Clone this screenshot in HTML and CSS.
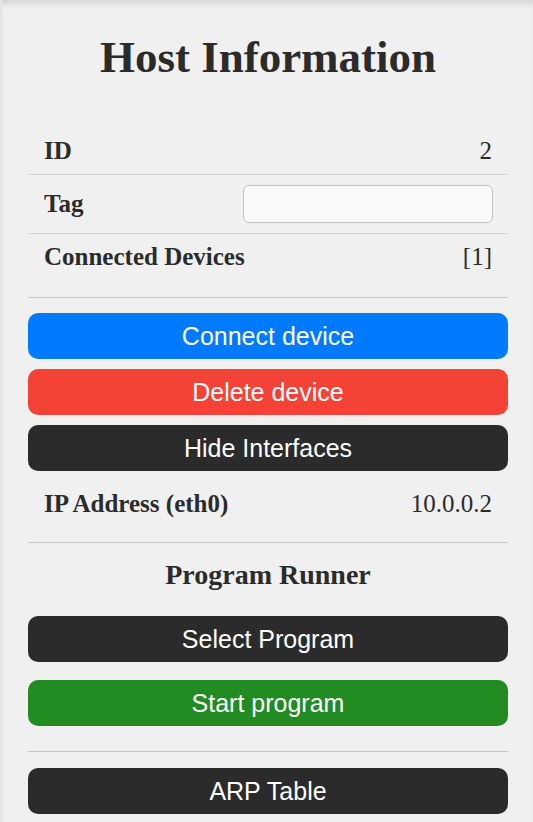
FILE: index.html
```html
<!DOCTYPE html>
<html>
<head>
<meta charset="utf-8">
<link rel="stylesheet" href="styles.css">
</head>
<body>
<div class="panel">
  <h1 class="title">Host Information</h1>
  <div class="info">
    <div class="row row-id"><span class="label">ID</span><span class="value">2</span></div>
    <div class="row row-tag"><span class="label">Tag</span><input class="tag-input" type="text"></div>
    <div class="row row-last"><span class="label">Connected Devices</span><span class="value">[1]</span></div>
  </div>
  <div class="actions">
    <button class="btn btn-blue">Connect device</button>
    <button class="btn btn-red">Delete device</button>
    <button class="btn btn-dark">Hide Interfaces</button>
  </div>
  <div class="section-ip">
    <div class="row"><span class="label">IP Address (eth0)</span><span class="value">10.0.0.2</span></div>
  </div>
  <div class="runner">
    <h2 class="subtitle">Program Runner</h2>
    <button class="btn btn-dark btn-select">Select Program</button>
    <button class="btn btn-green">Start program</button>
  </div>
  <div class="arp">
    <button class="btn btn-dark">ARP Table</button>
  </div>
</div>
</body>
</html>
```
FILE: styles.css
```css
html, body {
  margin: 0;
  padding: 0;
  background: #e4e4e4;
  height: 100%;
  overflow: hidden;
}
.panel {
  margin-left: 2px;
  min-height: 822px;
  background: #f0f0f0;
  padding: 0 25px 0 26px;
  box-shadow: inset 0 7px 8px -5px rgba(0, 0, 0, 0.16);
  color: #2b2b2b;
  font-family: "Liberation Serif", "Times New Roman", serif;
  display: flex;
  flex-direction: column;
}
.title {
  font-size: 45px;
  line-height: 50px;
  font-weight: bold;
  text-align: center;
  margin: 32px 0 46px;
}
.info {
  border-bottom: 1px solid #c4c4c4;
  padding-bottom: 17px;
}
.row {
  display: flex;
  justify-content: space-between;
  align-items: center;
  padding: 10px 16px;
  line-height: 26px;
  font-size: 25px;
  border-bottom: 1px solid #d2d2d2;
}
.row-last {
  border-bottom: none;
}
.row-tag {
  padding: 10px 15px 10px 16px;
}
.label {
  font-weight: bold;
  font-size: 25px;
}
.value {
  font-size: 25px;
}
.tag-input {
  width: 250px;
  height: 38px;
  box-sizing: border-box;
  border: 1px solid #c3c3c3;
  border-radius: 6px;
  background: #f8f9fa;
  margin: 0;
}
.actions {
  display: flex;
  flex-direction: column;
  gap: 10px;
  margin-top: 15px;
}
.btn {
  display: block;
  width: 100%;
  height: 46px;
  border: none;
  border-radius: 10px;
  color: #ffffff;
  font-family: "Liberation Sans", Arial, sans-serif;
  font-size: 25px;
  padding: 0;
  margin: 0;
}
.btn-blue { background: #007bff; }
.btn-red { background: #f44336; }
.btn-dark { background: #2b2b2b; }
.btn-green { background: #228b22; }
.section-ip {
  margin-top: 10px;
  padding-bottom: 15px;
  border-bottom: 1px solid #c4c4c4;
}
.section-ip .row {
  border-bottom: none;
}
.runner {
  display: flex;
  flex-direction: column;
  padding-bottom: 25px;
  border-bottom: 1px solid #c4c4c4;
}
.subtitle {
  font-size: 28px;
  line-height: 30px;
  font-weight: bold;
  text-align: center;
  margin: 17px 0 26px;
}
.btn-select {
  margin-bottom: 18px;
}
.arp {
  margin-top: 16px;
}
```
